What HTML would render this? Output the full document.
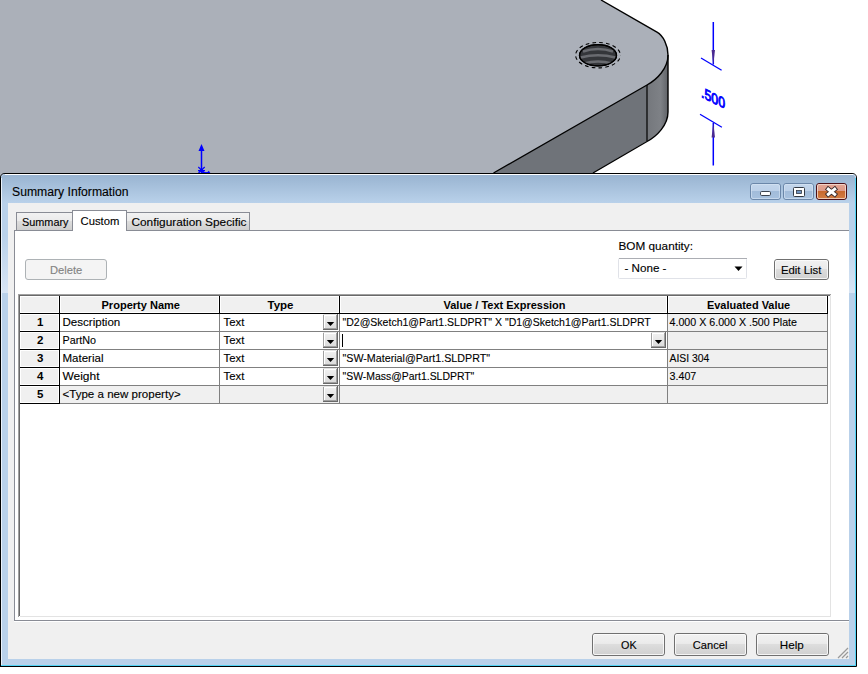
<!DOCTYPE html>
<html><head><meta charset="utf-8"><style>
html,body{margin:0;padding:0;background:#fff;width:868px;height:674px;overflow:hidden}
svg{display:block;font-family:"Liberation Sans", sans-serif}
text{stroke:currentColor;stroke-width:0.12px}
</style></head><body>
<svg width="868" height="674" viewBox="0 0 868 674">
<defs>
<clipPath id="holeclip"><ellipse cx="598" cy="55.2" rx="18.3" ry="10.4"/></clipPath>
<linearGradient id="sideh" x1="0" y1="0" x2="0" y2="1"><stop offset="0" stop-color="#b9d1ea"/><stop offset="1" stop-color="#d8e5f4"/></linearGradient>
<linearGradient id="titleg" x1="0" y1="0" x2="0" y2="1"><stop offset="0" stop-color="#99b4d1"/><stop offset="1" stop-color="#b9d1ea"/></linearGradient>
<linearGradient id="sideg" x1="0" y1="0" x2="1" y2="0"><stop offset="0" stop-color="#74777c"/><stop offset="0.65" stop-color="#7e8186"/><stop offset="1" stop-color="#606368"/></linearGradient>
<linearGradient id="btng" x1="0" y1="0" x2="0" y2="1"><stop offset="0" stop-color="#c3d6ec"/><stop offset="0.45" stop-color="#bdd1e9"/><stop offset="0.5" stop-color="#a2bcda"/><stop offset="1" stop-color="#a8c2df"/></linearGradient>
<linearGradient id="closeg" x1="0" y1="0" x2="0" y2="1"><stop offset="0" stop-color="#e5a796"/><stop offset="0.45" stop-color="#dd9a88"/><stop offset="0.5" stop-color="#c8692f"/><stop offset="1" stop-color="#d47f45"/></linearGradient>
<linearGradient id="tabg" x1="0" y1="0" x2="0" y2="1"><stop offset="0" stop-color="#f2f2f2"/><stop offset="0.45" stop-color="#ebebeb"/><stop offset="0.5" stop-color="#dddddd"/><stop offset="1" stop-color="#cfcfcf"/></linearGradient>
<linearGradient id="btn2g" x1="0" y1="0" x2="0" y2="1"><stop offset="0" stop-color="#f2f2f2"/><stop offset="0.45" stop-color="#ebebeb"/><stop offset="0.5" stop-color="#dddddd"/><stop offset="1" stop-color="#cfcfcf"/></linearGradient>
<linearGradient id="ddg" x1="0" y1="0" x2="0" y2="1"><stop offset="0" stop-color="#f3f3f3"/><stop offset="1" stop-color="#d9d9d9"/></linearGradient>
</defs>

<path d="M0,0 L601,0 L657,32.2 C663,35.6 668,45 668,55 C668,68.5 657,79.5 647,85 L493.5,173 L490,180 L0,180 Z" fill="#abb0b9"/>
<path d="M493.5,173 L647,85 L647,141 L593,173 Z" fill="#6f7379"/>
<path d="M647,85 C657,79.5 668,68.5 668,55 L668,112 C668,125 657,136 647,141.5 Z" fill="url(#sideg)"/>
<path d="M601,0 L657,32.2 C663,35.6 668,45 668,55 L668,112 C668,125 657,136 647,141.5 L593,173" fill="none" stroke="#000" stroke-width="1.4"/>
<path d="M493.5,173 L647,85 C657,79.5 668,68.5 668,55" fill="none" stroke="#000" stroke-width="1.4"/>
<path d="M647,85 L647,141" fill="none" stroke="#000" stroke-width="1.2"/>
<ellipse cx="598" cy="55.2" rx="18.5" ry="10.6" fill="#34363a" stroke="#000" stroke-width="1.3"/>
<g clip-path="url(#holeclip)"><path d="M583,51.5 Q598,46.5 613,51.5" fill="none" stroke="#696b70" stroke-width="2.4"/>
<path d="M580.5,57.5 Q598,53 615.5,57.5" fill="none" stroke="#696b70" stroke-width="2.4"/>
<path d="M584,63.5 Q598,59.5 612,63.5" fill="none" stroke="#696b70" stroke-width="2.4"/></g>
<ellipse cx="598" cy="55.2" rx="18.5" ry="10.6" fill="none" stroke="#000" stroke-width="1.3"/>
<ellipse cx="598" cy="55.2" rx="22.4" ry="12.7" fill="none" stroke="#000" stroke-width="1.1" stroke-dasharray="3.6 3.2" stroke-dashoffset="3.4"/>
<g stroke="#0000ff" fill="#0000ff" style="color:#0000ff">
 <line x1="201.5" y1="150" x2="201.5" y2="173" stroke-width="1.5"/>
 <path d="M201.5,144 L204.5,151 L198.5,151 Z" stroke="none"/>
 <path d="M198.3,167 L204.5,173 M204.7,167 L198.5,173 M198,170.6 L205,170.6" stroke-width="1.1"/>
 <circle cx="201.5" cy="170.5" r="1.8" stroke="none"/>
 <path d="M202,172.6 L209,172.6" stroke-width="1"/>
 <path d="M207,173 L208.6,170.8 L210.4,173 Z" stroke="none"/>
 <line x1="713.3" y1="22" x2="713.3" y2="64.5" stroke-width="1.5"/>
 <path d="M713.3,64.5 L711.6,50 L715,50 Z" fill="#4a2a90" stroke="none"/>
 <line x1="701" y1="58" x2="721.6" y2="70.2" stroke-width="1.3"/>
 <line x1="700" y1="114.3" x2="721.9" y2="127.2" stroke-width="1.3"/>
 <line x1="713.3" y1="123" x2="713.3" y2="165.5" stroke-width="1.5"/>
 <path d="M713.3,123 L711.6,137.5 L715,137.5 Z" fill="#4a2a90" stroke="none"/>
 <text x="0" y="0" font-size="15" style="stroke-width:0.9px" transform="matrix(1,0.5,0,1,701,97)" textLength="24" lengthAdjust="spacingAndGlyphs">.500</text>
</g>

<path d="M0.5,666 L0.5,178 Q0.5,173.5 5,173.5 L852,173.5 Q856.5,173.5 856.5,178 L856.5,666.5 L0,666.5" fill="none" stroke="#000" stroke-width="1"/>
<path d="M1,178 Q1,174 5,174 L852,174 Q856,174 856,178 L856,666 L1,666 Z" fill="#b9d1ea"/>
<path d="M1,203 L1,179 Q1,175 5,175 L852,175 Q855,175 855,179 L855,203 Z" fill="url(#titleg)"/>
<rect x="5" y="174" width="848" height="1" fill="#ffffff" />
<rect x="1" y="178" width="1" height="488" fill="#eaf2fb" />
<rect x="855" y="178" width="1" height="488" fill="#52d4f5" />
<rect x="1" y="665" width="855" height="1" fill="#52d4f5" />
<rect x="2" y="236" width="6" height="57" fill="url(#sideh)" />
<rect x="849" y="236" width="6" height="57" fill="url(#sideh)" />
<rect x="8" y="203" width="841" height="456" fill="#f0f0f0" />
<text x="12" y="196" font-size="12" textLength="116.5" lengthAdjust="spacingAndGlyphs">Summary Information</text>
<rect x="750.5" y="183.5" width="30" height="16" rx="2.5" fill="url(#btng)" stroke="#6b87a9"/>
<rect x="751.5" y="184.5" width="28" height="14" rx="1.5" fill="none" stroke="#d8e6f5" stroke-opacity="0.6"/>
<rect x="783.5" y="183.5" width="30" height="16" rx="2.5" fill="url(#btng)" stroke="#6b87a9"/>
<rect x="784.5" y="184.5" width="28" height="14" rx="1.5" fill="none" stroke="#d8e6f5" stroke-opacity="0.6"/>
<rect x="816.5" y="183.5" width="30" height="16" rx="2.5" fill="url(#closeg)" stroke="#4b1018"/>
<rect x="760.5" y="191.5" width="10" height="4" rx="1.2" fill="#fff" stroke="#3c4450"/>
<rect x="793.5" y="187.5" width="11" height="9" rx="1" fill="#fff" stroke="#333a44"/>
<rect x="796.5" y="190.5" width="5" height="3" fill="#6f93c0" stroke="#333a44" stroke-width="0.8"/>
<rect x="817.5" y="184.5" width="28" height="14" rx="1.5" fill="none" stroke="#f6e2d8" stroke-opacity="0.75"/>
<path d="M828.3,189.2 L834.7,194.3 M834.7,189.2 L828.3,194.3" stroke="#3a2a2a" stroke-width="4.8" stroke-linecap="square"/>
<path d="M828.3,189.2 L834.7,194.3 M834.7,189.2 L828.3,194.3" stroke="#fff" stroke-width="3" stroke-linecap="square"/>
<rect x="15" y="231" width="834" height="389" fill="#ffffff" />
<rect x="14" y="230" width="1" height="391" fill="#898c95" />
<rect x="14" y="620" width="835" height="1" fill="#898c95" />
<rect x="14" y="230" width="835" height="1" fill="#898c95" />
<rect x="14" y="621" width="835" height="1" fill="#ffffff" />
<rect x="17" y="213" width="55" height="17" fill="url(#tabg)" />
<rect x="16" y="212" width="1" height="18" fill="#898c95" />
<rect x="16" y="212" width="57" height="1" fill="#898c95" />
<rect x="127" y="213" width="122" height="17" fill="url(#tabg)" />
<rect x="126" y="212" width="124" height="1" fill="#898c95" />
<rect x="249" y="212" width="1" height="18" fill="#898c95" />
<rect x="73" y="211" width="53" height="20" fill="#ffffff" />
<rect x="72" y="210" width="1" height="21" fill="#898c95" />
<rect x="126" y="210" width="1" height="21" fill="#898c95" />
<rect x="72" y="210" width="55" height="1" fill="#898c95" />
<text x="22" y="225.5" font-size="11.5" textLength="46.5" lengthAdjust="spacingAndGlyphs">Summary</text>
<text x="80.5" y="224.5" font-size="11.5" textLength="38.8" lengthAdjust="spacingAndGlyphs">Custom</text>
<text x="131.5" y="226" font-size="11.5" textLength="115" lengthAdjust="spacingAndGlyphs">Configuration Specific</text>
<rect x="25.5" y="259.5" width="81" height="20" rx="2.5" fill="#f4f4f4" stroke="#adb2b5"/>
<text x="50" y="274" font-size="11.5" fill="#838383" style="color:#838383" textLength="32.3" lengthAdjust="spacingAndGlyphs">Delete</text>
<text x="618.5" y="250" font-size="11.5" textLength="74.5" lengthAdjust="spacingAndGlyphs">BOM quantity:</text>
<rect x="618.5" y="258.5" width="128" height="20" rx="1" fill="#fff" stroke="#e0e2e8"/>
<rect x="619" y="258" width="128" height="1" fill="#abadb3" />
<text x="624.5" y="272" font-size="11.5" textLength="42" lengthAdjust="spacingAndGlyphs">- None -</text>
<path d="M734.5,266.5 L742.5,266.5 L738.5,271 Z" fill="#000"/>
<rect x="774.5" y="259.5" width="54" height="20" rx="2.5" fill="url(#btn2g)" stroke="#707070"/>
<rect x="775.5" y="260.5" width="52" height="18" rx="1.5" fill="none" stroke="#fcfcfc" stroke-opacity="0.8"/>
<text x="781" y="274" font-size="11.5" textLength="40.3" lengthAdjust="spacingAndGlyphs">Edit List</text>
<rect x="18" y="294" width="813" height="1" fill="#a0a0a0" />
<rect x="18" y="294" width="1" height="323" fill="#a0a0a0" />
<rect x="19" y="295" width="811" height="1" fill="#696969" />
<rect x="19" y="295" width="1" height="321" fill="#696969" />
<rect x="20" y="296" width="810" height="320" fill="#ffffff" />
<rect x="830" y="295" width="1" height="322" fill="#e3e3e3" />
<rect x="20" y="616" width="811" height="1" fill="#e3e3e3" />
<rect x="831" y="294" width="1" height="324" fill="#ffffff" />
<rect x="18" y="617" width="814" height="1" fill="#ffffff" />
<rect x="20" y="296" width="39" height="17" fill="#ffffff" />
<rect x="21" y="297" width="37" height="15" fill="#f0f0f0" />
<rect x="60" y="296" width="159" height="17" fill="#ffffff" />
<rect x="61" y="297" width="157" height="15" fill="#f0f0f0" />
<rect x="220" y="296" width="119" height="17" fill="#ffffff" />
<rect x="221" y="297" width="117" height="15" fill="#f0f0f0" />
<rect x="340" y="296" width="327" height="17" fill="#ffffff" />
<rect x="341" y="297" width="325" height="15" fill="#f0f0f0" />
<rect x="668" y="296" width="159" height="17" fill="#ffffff" />
<rect x="669" y="297" width="157" height="15" fill="#f0f0f0" />
<rect x="20" y="313" width="808" height="1" fill="#000" />
<rect x="59" y="296" width="1" height="18" fill="#000" />
<rect x="219" y="296" width="1" height="18" fill="#000" />
<rect x="339" y="296" width="1" height="18" fill="#000" />
<rect x="667" y="296" width="1" height="18" fill="#000" />
<rect x="827" y="296" width="1" height="18" fill="#000" />
<rect x="20" y="314" width="39" height="17" fill="#ffffff" />
<rect x="21" y="315" width="37" height="15" fill="#f0f0f0" />
<rect x="20" y="331" width="40" height="1" fill="#000" />
<rect x="59" y="314" width="1" height="18" fill="#000" />
<rect x="668" y="314" width="159" height="17" fill="#f0f0f0" />
<rect x="60" y="331" width="768" height="1" fill="#808080" />
<rect x="219" y="314" width="1" height="18" fill="#808080" />
<rect x="339" y="314" width="1" height="18" fill="#808080" />
<rect x="667" y="314" width="1" height="18" fill="#808080" />
<rect x="827" y="314" width="1" height="18" fill="#808080" />
<rect x="323" y="314" width="15" height="16" fill="url(#ddg)" />
<rect x="323" y="314" width="1" height="16" fill="#a0a0a0" />
<rect x="323" y="314" width="15" height="1" fill="#e3e3e3" />
<rect x="324" y="315" width="1" height="14" fill="#ffffff" />
<rect x="324" y="315" width="13" height="1" fill="#ffffff" />
<rect x="337" y="314" width="1" height="16" fill="#696969" />
<rect x="323" y="329" width="15" height="1" fill="#696969" />
<rect x="336" y="315" width="1" height="14" fill="#a0a0a0" />
<rect x="324" y="328" width="13" height="1" fill="#a0a0a0" />
<path d="M326.8,322 L334.2,322 L330.5,326 Z" fill="#000"/>
<text x="37" y="325.5" font-size="11.5" font-weight="700" style="stroke-width:0">1</text>
<rect x="20" y="332" width="39" height="17" fill="#ffffff" />
<rect x="21" y="333" width="37" height="15" fill="#f0f0f0" />
<rect x="20" y="349" width="40" height="1" fill="#000" />
<rect x="59" y="332" width="1" height="18" fill="#000" />
<rect x="668" y="332" width="159" height="17" fill="#f0f0f0" />
<rect x="60" y="349" width="768" height="1" fill="#808080" />
<rect x="219" y="332" width="1" height="18" fill="#808080" />
<rect x="339" y="332" width="1" height="18" fill="#808080" />
<rect x="667" y="332" width="1" height="18" fill="#808080" />
<rect x="827" y="332" width="1" height="18" fill="#808080" />
<rect x="323" y="332" width="15" height="16" fill="url(#ddg)" />
<rect x="323" y="332" width="1" height="16" fill="#a0a0a0" />
<rect x="323" y="332" width="15" height="1" fill="#e3e3e3" />
<rect x="324" y="333" width="1" height="14" fill="#ffffff" />
<rect x="324" y="333" width="13" height="1" fill="#ffffff" />
<rect x="337" y="332" width="1" height="16" fill="#696969" />
<rect x="323" y="347" width="15" height="1" fill="#696969" />
<rect x="336" y="333" width="1" height="14" fill="#a0a0a0" />
<rect x="324" y="346" width="13" height="1" fill="#a0a0a0" />
<path d="M326.8,340 L334.2,340 L330.5,344 Z" fill="#000"/>
<rect x="651" y="332" width="15" height="16" fill="url(#ddg)" />
<rect x="651" y="332" width="1" height="16" fill="#a0a0a0" />
<rect x="651" y="332" width="15" height="1" fill="#e3e3e3" />
<rect x="652" y="333" width="1" height="14" fill="#ffffff" />
<rect x="652" y="333" width="13" height="1" fill="#ffffff" />
<rect x="665" y="332" width="1" height="16" fill="#696969" />
<rect x="651" y="347" width="15" height="1" fill="#696969" />
<rect x="664" y="333" width="1" height="14" fill="#a0a0a0" />
<rect x="652" y="346" width="13" height="1" fill="#a0a0a0" />
<path d="M654.8,340 L662.2,340 L658.5,344 Z" fill="#000"/>
<text x="37" y="343.5" font-size="11.5" font-weight="700" style="stroke-width:0">2</text>
<rect x="20" y="350" width="39" height="17" fill="#ffffff" />
<rect x="21" y="351" width="37" height="15" fill="#f0f0f0" />
<rect x="20" y="367" width="40" height="1" fill="#000" />
<rect x="59" y="350" width="1" height="18" fill="#000" />
<rect x="668" y="350" width="159" height="17" fill="#f0f0f0" />
<rect x="60" y="367" width="768" height="1" fill="#808080" />
<rect x="219" y="350" width="1" height="18" fill="#808080" />
<rect x="339" y="350" width="1" height="18" fill="#808080" />
<rect x="667" y="350" width="1" height="18" fill="#808080" />
<rect x="827" y="350" width="1" height="18" fill="#808080" />
<rect x="323" y="350" width="15" height="16" fill="url(#ddg)" />
<rect x="323" y="350" width="1" height="16" fill="#a0a0a0" />
<rect x="323" y="350" width="15" height="1" fill="#e3e3e3" />
<rect x="324" y="351" width="1" height="14" fill="#ffffff" />
<rect x="324" y="351" width="13" height="1" fill="#ffffff" />
<rect x="337" y="350" width="1" height="16" fill="#696969" />
<rect x="323" y="365" width="15" height="1" fill="#696969" />
<rect x="336" y="351" width="1" height="14" fill="#a0a0a0" />
<rect x="324" y="364" width="13" height="1" fill="#a0a0a0" />
<path d="M326.8,358 L334.2,358 L330.5,362 Z" fill="#000"/>
<text x="37" y="361.5" font-size="11.5" font-weight="700" style="stroke-width:0">3</text>
<rect x="20" y="368" width="39" height="17" fill="#ffffff" />
<rect x="21" y="369" width="37" height="15" fill="#f0f0f0" />
<rect x="20" y="385" width="40" height="1" fill="#000" />
<rect x="59" y="368" width="1" height="18" fill="#000" />
<rect x="668" y="368" width="159" height="17" fill="#f0f0f0" />
<rect x="60" y="385" width="768" height="1" fill="#808080" />
<rect x="219" y="368" width="1" height="18" fill="#808080" />
<rect x="339" y="368" width="1" height="18" fill="#808080" />
<rect x="667" y="368" width="1" height="18" fill="#808080" />
<rect x="827" y="368" width="1" height="18" fill="#808080" />
<rect x="323" y="368" width="15" height="16" fill="url(#ddg)" />
<rect x="323" y="368" width="1" height="16" fill="#a0a0a0" />
<rect x="323" y="368" width="15" height="1" fill="#e3e3e3" />
<rect x="324" y="369" width="1" height="14" fill="#ffffff" />
<rect x="324" y="369" width="13" height="1" fill="#ffffff" />
<rect x="337" y="368" width="1" height="16" fill="#696969" />
<rect x="323" y="383" width="15" height="1" fill="#696969" />
<rect x="336" y="369" width="1" height="14" fill="#a0a0a0" />
<rect x="324" y="382" width="13" height="1" fill="#a0a0a0" />
<path d="M326.8,376 L334.2,376 L330.5,380 Z" fill="#000"/>
<text x="37" y="379.5" font-size="11.5" font-weight="700" style="stroke-width:0">4</text>
<rect x="20" y="386" width="39" height="17" fill="#ffffff" />
<rect x="21" y="387" width="37" height="15" fill="#f0f0f0" />
<rect x="20" y="403" width="40" height="1" fill="#000" />
<rect x="59" y="386" width="1" height="18" fill="#000" />
<rect x="668" y="386" width="159" height="17" fill="#f0f0f0" />
<rect x="60" y="386" width="767" height="17" fill="#f0f0f0" />
<rect x="60" y="403" width="768" height="1" fill="#808080" />
<rect x="219" y="386" width="1" height="18" fill="#808080" />
<rect x="339" y="386" width="1" height="18" fill="#808080" />
<rect x="667" y="386" width="1" height="18" fill="#808080" />
<rect x="827" y="386" width="1" height="18" fill="#808080" />
<rect x="323" y="386" width="15" height="16" fill="url(#ddg)" />
<rect x="323" y="386" width="1" height="16" fill="#a0a0a0" />
<rect x="323" y="386" width="15" height="1" fill="#e3e3e3" />
<rect x="324" y="387" width="1" height="14" fill="#ffffff" />
<rect x="324" y="387" width="13" height="1" fill="#ffffff" />
<rect x="337" y="386" width="1" height="16" fill="#696969" />
<rect x="323" y="401" width="15" height="1" fill="#696969" />
<rect x="336" y="387" width="1" height="14" fill="#a0a0a0" />
<rect x="324" y="400" width="13" height="1" fill="#a0a0a0" />
<path d="M326.8,394 L334.2,394 L330.5,398 Z" fill="#000"/>
<text x="37" y="397.5" font-size="11.5" font-weight="700" style="stroke-width:0">5</text>
<text x="101.5" y="309" font-size="11" font-weight="700" style="stroke-width:0" textLength="78.5" lengthAdjust="spacingAndGlyphs">Property Name</text>
<text x="267.5" y="309" font-size="11" font-weight="700" style="stroke-width:0" textLength="26" lengthAdjust="spacingAndGlyphs">Type</text>
<text x="443.5" y="309" font-size="11" font-weight="700" style="stroke-width:0" textLength="122" lengthAdjust="spacingAndGlyphs">Value / Text Expression</text>
<text x="707" y="309" font-size="11" font-weight="700" style="stroke-width:0" textLength="83.2" lengthAdjust="spacingAndGlyphs">Evaluated Value</text>
<text x="62.5" y="326" font-size="11.2" textLength="57.8" lengthAdjust="spacingAndGlyphs">Description</text>
<text x="62.5" y="344" font-size="11.2" textLength="33.6" lengthAdjust="spacingAndGlyphs">PartNo</text>
<text x="62.5" y="362" font-size="11.2" textLength="41" lengthAdjust="spacingAndGlyphs">Material</text>
<text x="62.5" y="380" font-size="11.2" textLength="37" lengthAdjust="spacingAndGlyphs">Weight</text>
<text x="62.5" y="398" font-size="11.2" textLength="118.2" lengthAdjust="spacingAndGlyphs">&lt;Type a new property&gt;</text>
<text x="223.5" y="326" font-size="11.2" textLength="20.8" lengthAdjust="spacingAndGlyphs">Text</text>
<text x="223.5" y="344" font-size="11.2" textLength="20.8" lengthAdjust="spacingAndGlyphs">Text</text>
<text x="223.5" y="362" font-size="11.2" textLength="20.8" lengthAdjust="spacingAndGlyphs">Text</text>
<text x="223.5" y="380" font-size="11.2" textLength="20.8" lengthAdjust="spacingAndGlyphs">Text</text>
<text x="342.5" y="326" font-size="11.2" textLength="308.3" lengthAdjust="spacingAndGlyphs">"D2@Sketch1@Part1.SLDPRT" X "D1@Sketch1@Part1.SLDPRT</text>
<text x="342.5" y="362" font-size="11.2" textLength="147.5" lengthAdjust="spacingAndGlyphs">"SW-Material@Part1.SLDPRT"</text>
<text x="342.5" y="380" font-size="11.2" textLength="131.8" lengthAdjust="spacingAndGlyphs">"SW-Mass@Part1.SLDPRT"</text>
<text x="669.5" y="326" font-size="11.2" textLength="127.5" lengthAdjust="spacingAndGlyphs">4.000 X 6.000 X .500 Plate</text>
<text x="669.5" y="362" font-size="11.2" textLength="39.8" lengthAdjust="spacingAndGlyphs">AISI 304</text>
<text x="669.5" y="380" font-size="11.2" textLength="26.8" lengthAdjust="spacingAndGlyphs">3.407</text>
<rect x="342" y="334" width="1" height="13" fill="#000" />
<rect x="592.5" y="633.5" width="72" height="22" rx="2.5" fill="url(#btn2g)" stroke="#707070"/>
<rect x="593.5" y="634.5" width="70" height="20" rx="1.5" fill="none" stroke="#fcfcfc" stroke-opacity="0.8"/>
<text x="621" y="649" font-size="11.5" textLength="15.6" lengthAdjust="spacingAndGlyphs">OK</text>
<rect x="674.5" y="633.5" width="72" height="22" rx="2.5" fill="url(#btn2g)" stroke="#707070"/>
<rect x="675.5" y="634.5" width="70" height="20" rx="1.5" fill="none" stroke="#fcfcfc" stroke-opacity="0.8"/>
<text x="692.8" y="649" font-size="11.5" textLength="34.6" lengthAdjust="spacingAndGlyphs">Cancel</text>
<rect x="756.5" y="633.5" width="72" height="22" rx="2.5" fill="url(#btn2g)" stroke="#707070"/>
<rect x="757.5" y="634.5" width="70" height="20" rx="1.5" fill="none" stroke="#fcfcfc" stroke-opacity="0.8"/>
<text x="779.8" y="649" font-size="11.5" textLength="24" lengthAdjust="spacingAndGlyphs">Help</text>
<path d="M838,658 L848,648 M842,658 L848,652 M846,658 L848,656" stroke="#999" stroke-width="1.2"/>
</svg></body></html>
